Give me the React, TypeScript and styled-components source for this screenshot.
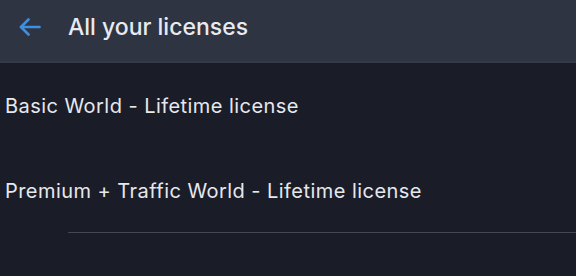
import { createGlobalStyle } from 'styled-components';
import styled from 'styled-components';

const GlobalStyle = createGlobalStyle`
  html, body {
    margin: 0;
    padding: 0;
    background: #1a1d28;
  }
  body {
    font-family: Inter, "Noto Sans", sans-serif;
    -webkit-font-smoothing: antialiased;
  }
`;

const Page = styled.div`
  display: flex;
  flex-direction: column;
  width: 576px;
  height: 276px;
  background: #1a1d28;
  overflow: hidden;
`;

const Header = styled.header`
  display: flex;
  align-items: center;
  height: 61px;
  box-sizing: border-box;
  padding: 0 0 7px 19px;
  background: #2e3442;
  border-bottom: 2px solid #343a48;
  flex-shrink: 0;
  height: 63px;
`;

const BackButton = styled.button`
  display: flex;
  align-items: center;
  justify-content: center;
  width: 22px;
  height: 18px;
  padding: 0;
  margin: 0 27px 0 0;
  background: none;
  border: none;
  color: #3f8fe0;
  cursor: pointer;
`;

const Title = styled.h1`
  margin: 0;
  font-size: 23px;
  font-weight: 500;
  color: #e8eaef;
  letter-spacing: 0;
`;

const List = styled.div`
  display: flex;
  flex-direction: column;
`;

const Row = styled.div<{ $divider?: boolean }>`
  position: relative;
  display: flex;
  align-items: center;
  height: 85px;
  padding-left: 5px;
  font-size: 20px;
  color: #e6e8ee;
  letter-spacing: 0.45px;

  &::after {
    content: '';
    display: ${(p) => (p.$divider ? 'block' : 'none')};
    position: absolute;
    left: 68px;
    right: 0;
    bottom: 0;
    height: 1px;
    background: #434854;
  }
`;

const BackArrow = () => (
  <svg width="22" height="18" viewBox="0 0 22 18" fill="none" stroke="currentColor" strokeWidth="2.6" strokeLinecap="round" strokeLinejoin="round">
    <path d="M20.5 9H2" />
    <path d="M9.5 1.5L2 9l7.5 7.5" />
  </svg>
);

const licenses = ['Basic World - Lifetime license', 'Premium + Traffic World - Lifetime license'];

export default function App() {
  return (
    <Page>
      <GlobalStyle />
      <Header>
        <BackButton aria-label="Back">
          <BackArrow />
        </BackButton>
        <Title>All your licenses</Title>
      </Header>
      <List>
        {licenses.map((name, i) => (
          <Row key={name} $divider={i === licenses.length - 1}>
            {name}
          </Row>
        ))}
      </List>
    </Page>
  );
}
